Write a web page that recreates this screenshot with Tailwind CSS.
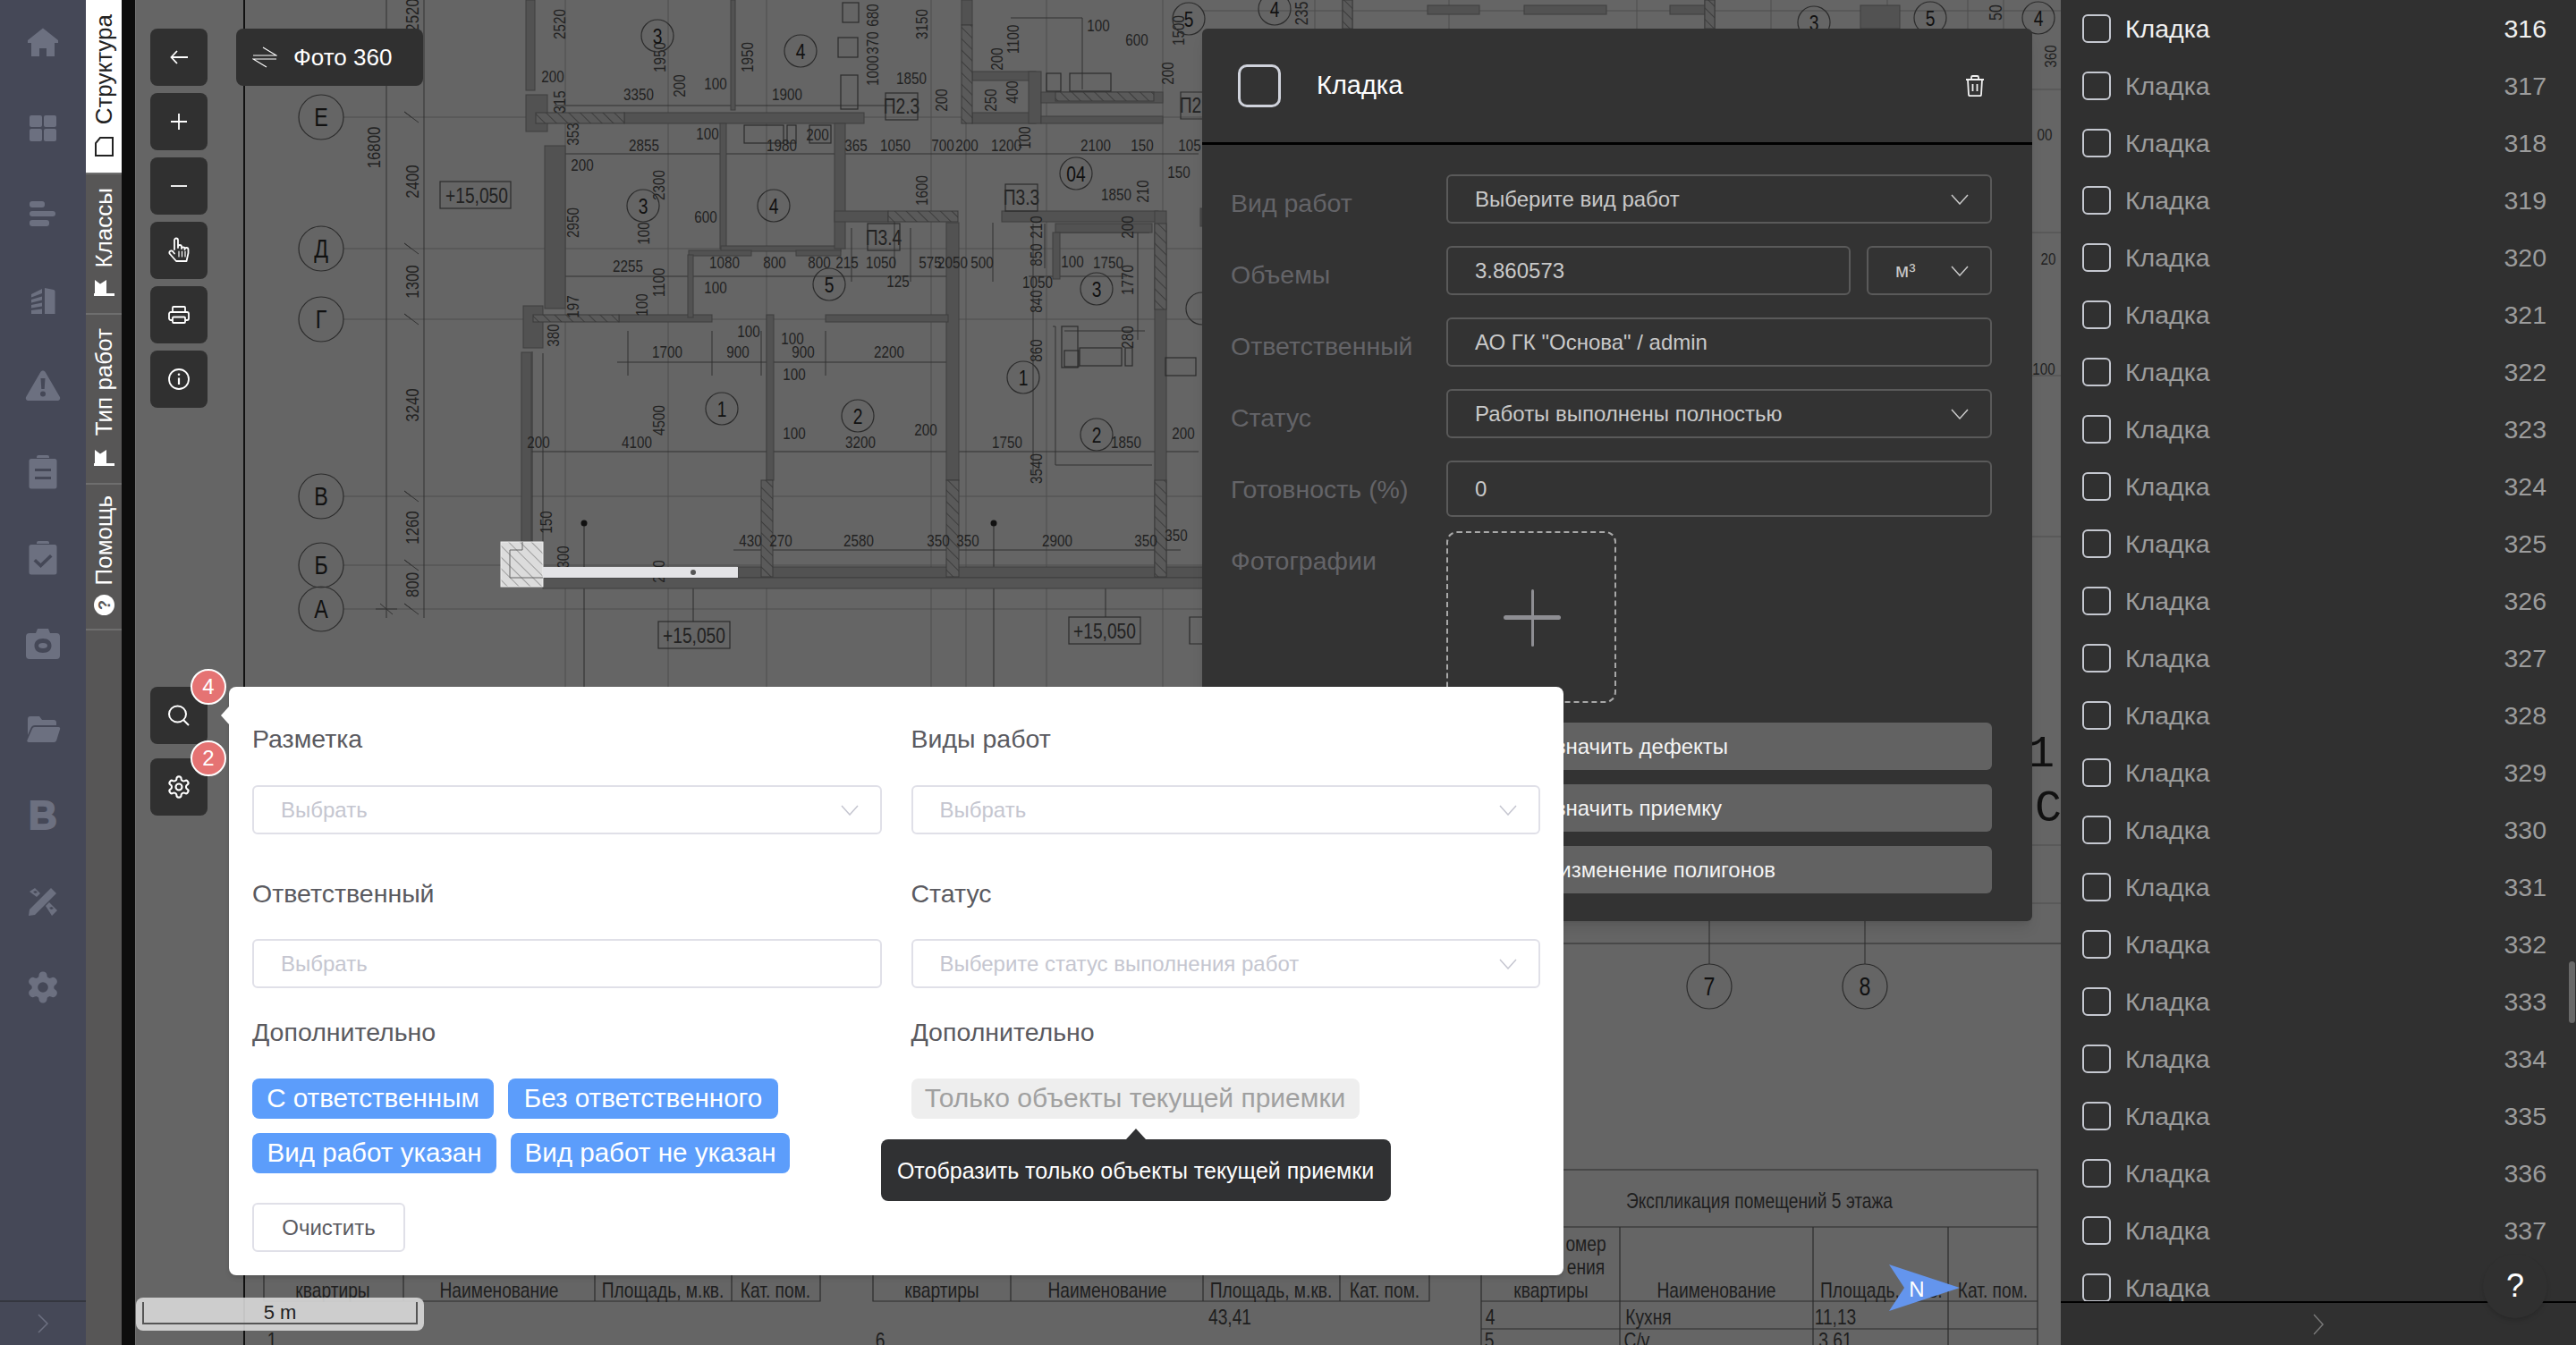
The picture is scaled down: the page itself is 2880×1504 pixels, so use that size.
<!DOCTYPE html>
<html lang="ru">
<head>
<meta charset="utf-8">
<title>Кладка</title>
<script src="https://cdn.jsdelivr.net/npm/@tailwindcss/browser@4"></script>
</head>
<body class="m-0 bg-[#656565]">
<div class="relative flex w-[2880px] h-[1504px] overflow-hidden font-['Liberation_Sans',Arial,sans-serif]">

  <!-- main nav -->
  <nav class="w-24 shrink-0 h-full bg-[#454857] flex flex-col text-[#6c7080]">
    <div class="h-24 flex items-center justify-center"><svg class="w-9 h-9" viewBox="0 0 36 36" fill="currentColor"><path d="M18 1.500 35 15v3h-4v15H22V24h-8v9H5V18H1v-3z"/></svg></div>
    <div class="h-24 flex items-center justify-center"><svg class="w-9 h-9" viewBox="0 0 36 36" fill="currentColor"><rect x="3" y="3" width="14" height="13" rx="2"/><rect x="19" y="3" width="14" height="13" rx="2"/><rect x="3" y="18" width="14" height="14" rx="2"/><rect x="19" y="18" width="14" height="14" rx="2"/></svg></div>
    <div class="h-24 flex items-center justify-center"><svg class="w-9 h-9" viewBox="0 0 36 36" fill="currentColor"><rect x="3" y="3" width="17" height="7" rx="3"/><rect x="3" y="14" width="29" height="6" rx="3"/><rect x="3" y="24" width="22" height="7" rx="3"/></svg></div>
    <div class="h-24 flex items-center justify-center"><svg class="w-9 h-9" viewBox="0 0 36 36" fill="currentColor"><path d="M20 4 30 6a2 2 0 0 1 1.500 2V33H20z"/><path d="M5 11 17 5v5L5 14.500zM5 17l12-3.500v4L5 20.500zM5 23l12-2.500v4L5 26.500zM5 29l12-1.500V33H5z"/></svg></div>
    <div class="h-24 flex items-center justify-center"><svg class="w-10 h-10" viewBox="0 0 40 40" fill="currentColor"><path fill-rule="evenodd" d="M20 2.500c1.200 0 2.200.6 2.800 1.700l16 27.500c1.100 2-.3 4.300-2.800 4.300H4c-2.500 0-3.900-2.300-2.800-4.300l16-27.500c.6-1.100 1.600-1.700 2.800-1.700zM17.500 11l.8 12h3.400l.8-12zM20 25.500a3 3 0 1 0 0 6 3 3 0 0 0 0-6z"/></svg></div>
    <div class="h-24 flex items-center justify-center"><svg class="w-10 h-10" viewBox="0 0 40 40" fill="currentColor"><path fill-rule="evenodd" d="M15 1h10a2 2 0 0 1 2 2v1h-14V3a2 2 0 0 1 2-2zM7 5h26a2.500 2.500 0 0 1 2.500 2.500V36a2.500 2.500 0 0 1-2.500 2.500H7A2.500 2.500 0 0 1 4.500 36V7.500A2.500 2.500 0 0 1 7 5zm4 11v3h18v-3zm0 9v3h18v-3z"/></svg></div>
    <div class="h-24 flex items-center justify-center"><svg class="w-10 h-10" viewBox="0 0 40 40" fill="currentColor"><path fill-rule="evenodd" d="M15 1h10a2 2 0 0 1 2 2v1h-14V3a2 2 0 0 1 2-2zM7 5h26a2.500 2.500 0 0 1 2.500 2.500V36a2.500 2.500 0 0 1-2.500 2.500H7A2.500 2.500 0 0 1 4.500 36V7.500A2.500 2.500 0 0 1 7 5zm21 11L17.500 26 12 21l-2.500 2.500 8 7.500 13-12.500z"/></svg></div>
    <div class="h-24 flex items-center justify-center"><svg class="w-10 h-10" viewBox="0 0 40 40" fill="currentColor"><path fill-rule="evenodd" d="M14 3h12l2 5h7a4 4 0 0 1 4 4v21a4 4 0 0 1-4 4H5a4 4 0 0 1-4-4V12a4 4 0 0 1 4-4h7zm6 11c-6 0-9.500 3-9.500 8s3.500 8 9.500 8 9.500-3 9.500-8-3.500-8-9.500-8zm0 5c3 0 5 1.200 5 3s-2 3-5 3-5-1.200-5-3 2-3 5-3z"/></svg></div>
    <div class="h-24 flex items-center justify-center"><svg class="w-10 h-10" viewBox="0 0 40 40" fill="currentColor"><path d="M6 5h10l3 4h13a3 3 0 0 1 3 3v3H11a5 5 0 0 0-4.500 3L3 26V8a3 3 0 0 1 3-3z"/><path d="M11 17h26.500c1.300 0 2 1 1.600 2.200l-4 12.800a3 3 0 0 1-2.900 2H4c-1.300 0-2-1-1.600-2.200L8 19a3 3 0 0 1 3-2z"/></svg></div>
    <div class="h-24 flex items-center justify-center"><span class="text-[44px] leading-none font-bold [-webkit-text-stroke:2px_#6c7080]">B</span></div>
    <div class="h-24 flex items-center justify-center"><svg class="w-9 h-9" viewBox="0 0 36 36" fill="currentColor"><path d="M27 3l6 6L9 33l-7 1 1-7z"/><path fill-rule="evenodd" d="M9 3 15 9 11 13 3 7zM21 23l4-4 9 9-6 6zM7 7l3-1 2 2-3 1zM25 25l3-1 2 2-3 1z"/></svg></div>
    <div class="h-24 flex items-center justify-center"><svg class="w-10 h-10" viewBox="0 0 24 24" fill="currentColor" stroke="currentColor" stroke-width="1"><path d="M12.220 2h-.44a2 2 0 0 0-2 2v.18a2 2 0 0 1-1 1.730l-.43.25a2 2 0 0 1-2 0l-.15-.08a2 2 0 0 0-2.730.73l-.22.38a2 2 0 0 0 .73 2.730l.15.1a2 2 0 0 1 1 1.720v.51a2 2 0 0 1-1 1.740l-.15.09a2 2 0 0 0-.73 2.730l.22.38a2 2 0 0 0 2.730.73l.15-.08a2 2 0 0 1 2 0l.43.25a2 2 0 0 1 1 1.730V20a2 2 0 0 0 2 2h.44a2 2 0 0 0 2-2v-.18a2 2 0 0 1 1-1.730l.43-.25a2 2 0 0 1 2 0l.15.08a2 2 0 0 0 2.730-.73l.22-.39a2 2 0 0 0-.73-2.730l-.15-.08a2 2 0 0 1-1-1.740v-.5a2 2 0 0 1 1-1.740l.15-.09a2 2 0 0 0 .73-2.730l-.22-.38a2 2 0 0 0-2.730-.73l-.15.08a2 2 0 0 1-2 0l-.43-.25a2 2 0 0 1-1-1.730V4a2 2 0 0 0-2-2z"/><circle cx="12" cy="12" r="3.500" fill="#454857" stroke="none"/></svg></div>
    <div class="mt-auto h-[50px] border-t-2 border-[#34363f] flex items-center justify-center"><svg class="w-3.5 h-6" viewBox="0 0 14 24" fill="none" stroke="#6c7080" stroke-width="1.500"><path d="M2 2l10 10L2 22"/></svg></div>
  </nav>

  <!-- vertical tabs -->
  <div class="w-10 shrink-0 h-full bg-[#575656] flex flex-col text-white text-[26px] leading-none">
    <div class="h-[193px] bg-white text-[#222] flex flex-col-reverse items-center pb-[18px] gap-[14px]">
      <svg class="w-[21px] h-[22px]" viewBox="0 0 21 22" fill="none" stroke="#222" stroke-width="2"><path d="M1 21V7l5-6h14v20z"/></svg>
      <span class="[writing-mode:vertical-rl] rotate-180">Структура</span>
    </div>
    <div class="h-[157px] border-t-2 border-[#6e6e6e] flex flex-col-reverse items-center pb-[19px] gap-[14px]">
      <svg class="w-[23px] h-[18px]" viewBox="0 0 23 18" fill="#fff"><path d="M0 15h23v3H0zM1 0l6 4.500L14 0v15H1z"/></svg>
      <span class="[writing-mode:vertical-rl] rotate-180">Классы</span>
    </div>
    <div class="h-[190px] border-t-2 border-[#6e6e6e] flex flex-col-reverse items-center pb-[19px] gap-[16px]">
      <svg class="w-[23px] h-[18px]" viewBox="0 0 23 18" fill="#fff"><path d="M0 15h23v3H0zM1 0l6 4.500L14 0v15H1z"/></svg>
      <span class="[writing-mode:vertical-rl] rotate-180">Тип работ</span>
    </div>
    <div class="h-[165px] border-y-2 border-[#6e6e6e] flex flex-col-reverse items-center pb-[15px] gap-[11px]">
      <svg class="w-[23px] h-[23px]" viewBox="0 0 23 23"><circle cx="11.500" cy="11.500" r="11.500" fill="#fff"/><text x="11.500" y="11.500" transform="rotate(-90 11.500 11.500)" text-anchor="middle" dominant-baseline="central" font-size="18" font-weight="700" fill="#575656" font-family="Liberation Sans">?</text></svg>
      <span class="[writing-mode:vertical-rl] rotate-180">Помощь</span>
    </div>
  </div>

  <div class="w-[15px] shrink-0 h-full bg-[#0d0d0d]"></div>

  <!-- canvas -->
  <main class="relative flex-1 h-full bg-[#656565]">
    <svg id="plan" class="absolute left-0 top-0" width="2153" height="1504" viewBox="151 0 2153 1504" font-family="Liberation Sans, sans-serif">
      <defs>
        <pattern id="h1" width="9" height="9" patternUnits="userSpaceOnUse" patternTransform="rotate(-45)"><rect width="9" height="9" fill="#5a5a5a"/><line x1="0" y1="0" x2="0" y2="9" stroke="#333" stroke-width="1.500"/></pattern>
        <pattern id="h2" width="9" height="9" patternUnits="userSpaceOnUse" patternTransform="rotate(-45)"><rect width="9" height="9" fill="#dcdcdc"/><line x1="0" y1="0" x2="0" y2="9" stroke="#8a8a8a" stroke-width="1.500"/></pattern>
      </defs>

      <!-- sheet frame and grid -->
      <line x1="151.500" y1="0" x2="151.500" y2="1504" stroke="#707070" stroke-width="1"/>
      <line x1="273" y1="0" x2="273" y2="1504" stroke="#111" stroke-width="2"/>
      <g stroke="#4e4e4e" stroke-width="1">
        <path d="M384 131H1344M384 278H1344M384 357H1344M384 555H1344M384 632H1344M384 681H1344"/>
        <path d="M632 0V768M747 0V768M857 0V768M1041 0V768M1080 0V768M1170 0V768M1300 0V768"/>
        <path d="M1470 0V32M1620 0V32M1830 0V32M1980 0V32M2110 0V32M2200 0V32M2240 0V32"/>
        <path d="M1344 12H2304M2272 100H2304M2272 260H2304M2272 420H2304M2272 600H2304M2272 945H2304M2272 1010H2304"/>
      </g>
      <g stroke="#333" stroke-width="1" fill="none">
        <path d="M432 0V691M474 0V691"/>
        <path d="M620 118H1000M620 172H1340M610 309H1060M690 405H1060M590 505H1340M820 615H1320M1150 309H1260M1190 370H1280"/>
        <path d="M702 370V420M796 370V420M851 370V420M923 370V420M1000 240V300M952 255V315M1018 255V315M1110 249V315M1168 250V300"/>
        <path d="M595 393V610M607 395V606M1155 250V530M1177 365H1180V520H1288M1180 260H1285M1272 260V380M1210 100V20H1130"/>
        <path d="M420 681h24M460 131l-8-6 16 12M460 278l-8-6 16 12M460 357l-8-6 16 12M460 555l-8-6 16 12M460 632l-8-6 16 12M460 681l-8-6 16 12M425 675l14 12"/>
      </g>
      <g stroke="#2c2c2c" stroke-width="1" fill="none">
        <path d="M1748 1055H2304M1911 1030V1078M2085 1030V1078"/>
        <path d="M653 585V768M1111 585V768M775 640V695M1236 640V690"/>
      </g>
      <circle cx="653" cy="585" r="3.500" fill="#111"/><circle cx="1111" cy="585" r="3.500" fill="#111"/>
      <circle cx="775" cy="640" r="3" fill="#444"/><circle cx="1236" cy="640" r="3" fill="#333"/>

      <!-- walls -->
      <g fill="#525252" stroke="#3f3f3f" stroke-width="1">
        <rect x="588" y="0" width="10" height="101"/>
        <rect x="817" y="0" width="5" height="123"/>
        <rect x="1075" y="0" width="12" height="28"/>
        <rect x="588" y="106" width="24" height="41"/>
        <rect x="698" y="126" width="268" height="12"/>
        <rect x="609" y="163" width="23" height="182"/>
        <rect x="805" y="138" width="7" height="140"/>
        <rect x="806" y="275" width="134" height="6"/>
        <rect x="933" y="138" width="12" height="140"/>
        <rect x="933" y="236" width="60" height="12"/>
        <rect x="1120" y="236" width="175" height="12"/>
        <rect x="1058" y="249" width="14" height="288"/>
        <rect x="857" y="352" width="8" height="185"/>
        <rect x="692" y="352" width="104" height="8"/>
        <rect x="923" y="352" width="137" height="8"/>
        <rect x="585" y="342" width="22" height="47"/>
        <rect x="583" y="394" width="11" height="212"/>
        <rect x="770" y="280" width="70" height="6"/>
        <rect x="890" y="280" width="50" height="6"/>
        <rect x="769" y="285" width="6" height="70"/>
        <rect x="825" y="634" width="520" height="12"/>
        <rect x="607" y="646" width="738" height="12" fill="#555"/>
        <rect x="1087" y="80" width="71" height="10"/>
        <rect x="1087" y="126" width="71" height="12"/>
        <rect x="1150" y="80" width="14" height="58"/>
        <rect x="1164" y="103" width="136" height="12"/>
        <rect x="1164" y="130" width="136" height="8"/>
        <rect x="1291" y="236" width="13" height="409"/>
        <rect x="1180" y="250" width="108" height="10"/>
        <rect x="1177" y="260" width="8" height="52"/>
        <rect x="1342" y="233" width="2" height="20"/>
        <rect x="1501" y="0" width="11" height="32"/>
        <rect x="1596" y="6" width="58" height="10"/>
        <rect x="1704" y="6" width="92" height="10"/>
        <rect x="1867" y="6" width="40" height="10"/>
        <rect x="1906" y="0" width="11" height="32"/>
        <rect x="2080" y="6" width="44" height="26"/>
      </g>
      <g fill="url(#h1)" stroke="#3a3a3a" stroke-width="1">
        <rect x="599" y="126" width="99" height="12"/>
        <rect x="596" y="352" width="96" height="8"/>
        <rect x="1075" y="28" width="12" height="110"/>
        <rect x="993" y="236" width="78" height="12"/>
        <rect x="851" y="537" width="13" height="108"/>
        <rect x="1058" y="537" width="14" height="108"/>
        <rect x="1291" y="537" width="13" height="108"/>
        <rect x="1291" y="250" width="13" height="96"/>
        <rect x="1180" y="103" width="110" height="10"/>
        <rect x="1501" y="0" width="11" height="32"/>
        <rect x="1906" y="0" width="11" height="32"/>
      </g>
      <!-- sanitary fixtures -->
      <g fill="none" stroke="#2c2c2c" stroke-width="1.200">
        <rect x="942" y="3" width="18" height="22"/><rect x="937" y="42" width="22" height="22"/><rect x="940" y="84" width="19" height="38"/>
        <rect x="832" y="140" width="44" height="20"/><rect x="880" y="140" width="10" height="20"/><rect x="905" y="140" width="24" height="20"/>
        <rect x="1190" y="392" width="16" height="18"/><rect x="1207" y="389" width="47" height="20"/><rect x="1258" y="389" width="8" height="20"/>
        <rect x="1187" y="365" width="18" height="46"/><rect x="1303" y="400" width="34" height="20"/><rect x="1196" y="82" width="46" height="20"/><rect x="1170" y="82" width="16" height="20"/>
      </g>

      <!-- plan labels -->
      <g fill="#222" font-size="19" text-anchor="middle" dominant-baseline="central">
        <text x="714" y="105">3350</text><text x="880" y="105">1900</text><text x="1019" y="87">1850</text><text x="618" y="85">200</text><text x="800" y="93">100</text>
        <text x="720" y="162">2855</text><text x="791" y="149">100</text><text x="874" y="162">1980</text><text x="914" y="150">200</text><text x="957" y="162">365</text><text x="1001" y="162">1050</text><text x="1054" y="162">700</text><text x="1081" y="162">200</text><text x="1125" y="162">1200</text><text x="1225" y="162">2100</text><text x="1277" y="162">150</text><text x="1330" y="162">105</text>
        <text x="651" y="184">200</text><text x="1318" y="192">150</text><text x="1248" y="217">1850</text><text x="1271" y="44">600</text><text x="1228" y="28">100</text>
        <text x="789" y="242">600</text><text x="702" y="297">2255</text><text x="810" y="293">1080</text><text x="866" y="293">800</text><text x="916" y="293">800</text><text x="947" y="293">215</text><text x="985" y="293">1050</text><text x="1040" y="293">575</text><text x="1065" y="293">2050</text><text x="1098" y="293">500</text>
        <text x="800" y="321">100</text><text x="1004" y="314">125</text><text x="1160" y="315">1050</text><text x="1199" y="292">100</text><text x="1239" y="293">1750</text>
        <text x="746" y="393">1700</text><text x="825" y="393">900</text><text x="837" y="370">100</text><text x="886" y="378">100</text><text x="898" y="393">900</text><text x="994" y="393">2200</text><text x="888" y="418">100</text>
        <text x="602" y="494">200</text><text x="712" y="494">4100</text><text x="888" y="484">100</text><text x="962" y="494">3200</text><text x="1035" y="480">200</text><text x="1126" y="494">1750</text><text x="1259" y="494">1850</text><text x="1323" y="484">200</text>
        <text x="839" y="604">430</text><text x="873" y="604">270</text><text x="960" y="604">2580</text><text x="1049" y="604">350</text><text x="1082" y="604">350</text><text x="1182" y="604">2900</text><text x="1281" y="604">350</text><text x="1315" y="598">350</text>
        <text x="625" y="27" transform="rotate(-90 625 27)">2520</text><text x="737" y="64" transform="rotate(-90 737 64)">1950</text><text x="835" y="64" transform="rotate(-90 835 64)">1950</text><text x="975" y="17" transform="rotate(-90 975 17)">680</text><text x="975" y="48" transform="rotate(-90 975 48)">370</text><text x="975" y="79" transform="rotate(-90 975 79)">1000</text><text x="1030" y="27" transform="rotate(-90 1030 27)">3150</text><text x="759" y="96" transform="rotate(-90 759 96)">200</text><text x="625" y="114" transform="rotate(-90 625 114)">315</text><text x="640" y="150" transform="rotate(-90 640 150)">353</text><text x="736" y="207" transform="rotate(-90 736 207)">2300</text><text x="640" y="249" transform="rotate(-90 640 249)">2950</text><text x="719" y="261" transform="rotate(-90 719 261)">100</text><text x="736" y="316" transform="rotate(-90 736 316)">1100</text><text x="717" y="341" transform="rotate(-90 717 341)">100</text><text x="640" y="343" transform="rotate(-90 640 343)">197</text><text x="618" y="375" transform="rotate(-90 618 375)">380</text><text x="736" y="470" transform="rotate(-90 736 470)">4500</text><text x="610" y="584" transform="rotate(-90 610 584)">150</text><text x="629" y="623" transform="rotate(-90 629 623)">300</text><text x="736" y="639" transform="rotate(-90 736 639)">200</text><text x="1030" y="213" transform="rotate(-90 1030 213)">1600</text><text x="1052" y="112" transform="rotate(-90 1052 112)">200</text><text x="1107" y="112" transform="rotate(-90 1107 112)">250</text><text x="1131" y="103" transform="rotate(-90 1131 103)">400</text><text x="1114" y="66" transform="rotate(-90 1114 66)">200</text><text x="1132" y="44" transform="rotate(-90 1132 44)">1100</text><text x="1317" y="34" transform="rotate(-90 1317 34)">1500</text><text x="1305" y="82" transform="rotate(-90 1305 82)">200</text><text x="1145" y="154" transform="rotate(-90 1145 154)">100</text><text x="1158" y="254" transform="rotate(-90 1158 254)">210</text><text x="1158" y="285" transform="rotate(-90 1158 285)">850</text><text x="1158" y="337" transform="rotate(-90 1158 337)">840</text><text x="1158" y="392" transform="rotate(-90 1158 392)">860</text><text x="1158" y="524" transform="rotate(-90 1158 524)">3540</text><text x="1260" y="313" transform="rotate(-90 1260 313)">1770</text><text x="1277" y="214" transform="rotate(-90 1277 214)">210</text><text x="1260" y="254" transform="rotate(-90 1260 254)">200</text><text x="1260" y="377" transform="rotate(-90 1260 377)">280</text>
        <text x="417" y="165" transform="rotate(-90 417 165)" font-size="21">16800</text><text x="460" y="17" transform="rotate(-90 460 17)" font-size="21">2520</text><text x="460" y="203" transform="rotate(-90 460 203)" font-size="21">2400</text><text x="460" y="315" transform="rotate(-90 460 315)" font-size="21">1300</text><text x="460" y="453" transform="rotate(-90 460 453)" font-size="21">3240</text><text x="460" y="590" transform="rotate(-90 460 590)" font-size="21">1260</text><text x="460" y="654" transform="rotate(-90 460 654)" font-size="21">800</text>
        <text x="1455" y="15" transform="rotate(-90 1455 15)" font-size="20">235</text><text x="2231" y="14" transform="rotate(-90 2231 14)" font-size="20">50</text><text x="2292" y="63" transform="rotate(-90 2292 63)">360</text><text x="2286" y="150">00</text><text x="2290" y="289">20</text><text x="2285" y="412">100</text>
        <text x="1008" y="118" font-size="24">П2.3</text><text x="988" y="265" font-size="24">П3.4</text><text x="1142" y="220" font-size="24">П3.3</text><text x="1331" y="117" font-size="24">П2</text>
        <text x="533" y="218" font-size="24">+15,050</text><text x="776" y="710" font-size="24">+15,050</text><text x="1235" y="705" font-size="24">+15,050</text>
      </g>
      <g fill="none" stroke="#2c2c2c" stroke-width="1.200">
        <rect x="492" y="203" width="79" height="30"/><rect x="736" y="695" width="80" height="30"/><rect x="1195" y="690" width="80" height="30"/><path d="M1344 690h-14v30h14"/>
        <rect x="990" y="104" width="36" height="30"/><rect x="970" y="250" width="36" height="30"/><rect x="1124" y="206" width="36" height="30"/><path d="M1344 103h-24v30h24"/>
        <ellipse cx="359" cy="131" rx="25" ry="25"/><ellipse cx="359" cy="278" rx="25" ry="25"/><ellipse cx="359" cy="357" rx="25" ry="25"/><ellipse cx="359" cy="555" rx="25" ry="25"/><ellipse cx="359" cy="632" rx="25" ry="25"/><ellipse cx="359" cy="681" rx="25" ry="25"/>
        <circle cx="735" cy="40" r="18"/><circle cx="895" cy="57" r="18"/><circle cx="719" cy="230" r="18"/><circle cx="865" cy="230" r="18"/><circle cx="927" cy="318" r="18"/><circle cx="1203" cy="194" r="18"/><circle cx="1226" cy="323" r="18"/><circle cx="1144" cy="422" r="18"/><circle cx="807" cy="457" r="18"/><circle cx="959" cy="465" r="18"/><circle cx="1226" cy="486" r="18"/><circle cx="1329" cy="21" r="18"/>
        <circle cx="1425" cy="10" r="18"/><circle cx="2028" cy="25" r="18"/><circle cx="2158" cy="20" r="18"/><circle cx="2279" cy="20" r="18"/><circle cx="1344" cy="345" r="18"/>
        <circle cx="1911" cy="1103" r="25"/><circle cx="2085" cy="1103" r="25"/>
      </g>
      <g fill="#111" font-size="29" text-anchor="middle" dominant-baseline="central">
        <text x="359" y="131">Е</text><text x="359" y="278">Д</text><text x="359" y="357">Г</text><text x="359" y="555">В</text><text x="359" y="632">Б</text><text x="359" y="681">А</text>
        <text x="1911" y="1103">7</text><text x="2085" y="1103">8</text>
        <g font-size="24"><text x="735" y="40">3</text><text x="895" y="57">4</text><text x="719" y="230">3</text><text x="865" y="230">4</text><text x="927" y="318">5</text><text x="1203" y="194">04</text><text x="1226" y="323">3</text><text x="1144" y="422">1</text><text x="807" y="457">1</text><text x="959" y="465">2</text><text x="1226" y="486">2</text><text x="1329" y="21">5</text><text x="1425" y="10">4</text><text x="2028" y="25">3</text><text x="2158" y="20">5</text><text x="2279" y="20">4</text></g>
        <text data-keep="1" x="2282" y="843" font-size="50" font-family="Liberation Mono">1</text><text data-keep="1" x="2290" y="904" font-size="50" font-family="Liberation Mono">С</text>
      </g>

      <!-- highlighted selection -->
      <rect x="560" y="606" width="47" height="50" fill="url(#h2)" stroke="#f0f0f0" stroke-width="1"/>
      <path d="M570 615h14v-9M570 615V646h37" fill="none" stroke="#666" stroke-width="1"/>
      <rect x="607" y="634" width="218" height="12" fill="#e3e3e6"/>
      <circle cx="775" cy="640" r="3" fill="#555"/>

      <!-- bottom tables -->
      <g fill="none" stroke="#2c2c2c" stroke-width="1.200">
        <path d="M295 1426V1455H917V1426M451 1426V1455M665 1426V1455M818 1426V1455"/>
        <path d="M976 1426V1455H1598V1426M1130 1426V1455M1345 1426V1455M1498 1426V1455"/>
        <path d="M1748 1308H2278V1504M1748 1372H2278M1811 1372V1504M2027 1372V1504M2178 1372V1504M1656 1426V1504M1656 1455H2278M1656 1486H2278"/>
      </g>
      <g fill="#1e1e1e" font-size="24" text-anchor="middle" dominant-baseline="central">
        <text x="372" y="1442">квартиры</text><text x="558" y="1442">Наименование</text><text x="741" y="1442">Площадь, м.кв.</text><text x="867" y="1442">Кат. пом.</text>
        <text x="1053" y="1442">квартиры</text><text x="1238" y="1442">Наименование</text><text x="1421" y="1442">Площадь, м.кв.</text><text x="1548" y="1442">Кат. пом.</text>
        <text x="304" y="1498">1</text><text x="984" y="1498">6</text><text x="1375" y="1472">43,41</text>
        <text x="1967" y="1342">Экспликация помещений 5 этажа</text>
        <text x="1773" y="1390">омер</text><text x="1773" y="1416">ения</text>
        <text x="1734" y="1442">квартиры</text><text x="1919" y="1442">Наименование</text><text x="2035" y="1442" text-anchor="start">Площадь, м.кв.</text><text x="2228" y="1442">Кат. пом.</text>
        <text x="1666" y="1472">4</text><text x="1843" y="1472">Кухня</text><text x="2052" y="1472">11,13</text><text x="1665" y="1498">5</text><text x="1830" y="1498">С/у</text><text x="2052" y="1498">3,61</text>
      </g>

      <!-- north arrow -->
      <polygon points="2112,1414 2191,1440 2112,1466 2129,1440" fill="#6495ed"/>
      <text data-keep="1" x="2143" y="1441" text-anchor="middle" dominant-baseline="central" fill="#fff" font-size="24" font-family="Liberation Sans">N</text>
    </svg>

    <!-- map tools -->
    <div class="absolute left-[17px] top-[32px] flex flex-col gap-2">
      <button class="w-16 h-16 rounded-lg bg-[#303030] flex items-center justify-center"><svg class="w-5 h-4" viewBox="0 0 20 16" fill="none" stroke="#fff" stroke-width="1.800"><path d="M20 8H1.500M8 1 1.500 8 8 15"/></svg></button>
      <button class="w-16 h-16 rounded-lg bg-[#303030] flex items-center justify-center"><svg class="w-5 h-5" viewBox="0 0 20 20" fill="none" stroke="#fff" stroke-width="1.800"><path d="M10 1v18M1 10h18"/></svg></button>
      <button class="w-16 h-16 rounded-lg bg-[#303030] flex items-center justify-center"><svg class="w-5 h-5" viewBox="0 0 20 20" fill="none" stroke="#fff" stroke-width="1.800"><path d="M1 10h18"/></svg></button>
      <button class="w-16 h-16 rounded-lg bg-[#303030] flex items-center justify-center"><svg class="w-6 h-[30px]" viewBox="0 0 24 30" fill="none" stroke="#fff" stroke-width="1.800" stroke-linejoin="round" stroke-linecap="round"><path d="M7 14V3.500a2 2 0 0 1 4 0V12M11 11a2 2 0 0 1 4 0v2M15 12.500a2 2 0 0 1 3.500 0v1.500M18.500 14a2 2 0 0 1 4 0v4l-2 9H9L2 19a2 2 0 0 1 0-3c1-1 2.500-.5 3 0l2 2.500"/><path d="M12 16v6M15.500 16v6M19 16v6" stroke-width="1.200"/></svg></button>
      <button class="w-16 h-16 rounded-lg bg-[#303030] flex items-center justify-center"><svg class="w-6 h-5" viewBox="0 0 24 20" fill="none" stroke="#fff" stroke-width="1.800" stroke-linejoin="round"><path d="M5 7V2a1 1 0 0 1 1-1h12a1 1 0 0 1 1 1v5"/><path d="M5 16H3a2 2 0 0 1-2-2V9a2 2 0 0 1 2-2h18a2 2 0 0 1 2 2v5a2 2 0 0 1-2 2h-2"/><rect x="5" y="12.500" width="14" height="6.500" rx="1"/></svg></button>
      <button class="w-16 h-16 rounded-lg bg-[#303030] flex items-center justify-center"><svg class="w-6 h-6" viewBox="0 0 24 24" fill="none" stroke="#fff" stroke-width="1.800"><circle cx="12" cy="12" r="11"/><path d="M12 10.500V18" stroke-width="2.200"/><circle cx="12" cy="6.800" r="1.300" fill="#fff" stroke="none"/></svg></button>
    </div>

    <div class="absolute left-[113px] top-[32px] w-[209px] h-16 rounded-lg bg-[#303030] flex items-center pl-[18px] gap-[18px] text-white text-[26px] font-medium">
      <svg class="w-7 h-7" viewBox="0 0 28 28" fill="none" stroke="#fff" stroke-width="1.200"><path d="M1 12H27L12 3M27 16H1L16 25"/></svg>
      <span>Фото 360</span>
    </div>

    <!-- details panel -->
    <section class="absolute left-[1193px] top-[32px] w-[928px] h-[998px] rounded-md bg-[#333333] shadow-lg">
      <header class="h-[130px] border-b-[3px] border-black flex items-center pl-10 pr-[53px]">
        <span class="w-12 h-12 rounded-[10px] border-[3px] border-[#d0d3dc]"></span>
        <span class="ml-10 text-white text-[29px]">Кладка</span>
        <svg class="ml-auto w-[22px] h-6" viewBox="0 0 22 24" fill="none" stroke="#f0f0f0" stroke-width="1.800"><path d="M1 5h20M7 4.500V2.500A1.500 1.500 0 0 1 8.500 1h5A1.500 1.500 0 0 1 15 2.500v2"/><path d="M3 5l1 17a1.500 1.500 0 0 0 1.500 1.200h11A1.500 1.500 0 0 0 18 22L19 5"/><path d="M8.500 10v8M13.500 10v8"/></svg>
      </header>
      <div class="pl-8 pr-[45px] pt-[33px] text-[24px] text-[#c9c9c9]">
        <div class="flex h-[55px]">
          <span class="w-[241px] pt-[14px] text-[28.500px] leading-[36px] text-[#646468]">Вид работ</span>
          <div class="flex-1 rounded-md border-2 border-[#5a5a5a] flex items-center pl-[30px] pr-[24px] justify-between"><span>Выберите вид работ</span><svg class="w-5 h-3" viewBox="0 0 20 12" fill="none" stroke="#c9c9c9" stroke-width="1.500"><path d="M1 1l9 10 9-10"/></svg></div>
        </div>
        <div class="flex h-[55px] mt-[25px]">
          <span class="w-[241px] pt-[14px] text-[28.500px] leading-[36px] text-[#646468]">Объемы</span>
          <div class="flex-1 flex gap-[18px]">
            <div class="flex-1 rounded-md border-2 border-[#5a5a5a] flex items-center pl-[30px]">3.860573</div>
            <div class="w-[140px] rounded-md border-2 border-[#5a5a5a] flex items-center pl-[30px] pr-[24px] justify-between"><span class="text-[22px]">м³</span><svg class="w-5 h-3" viewBox="0 0 20 12" fill="none" stroke="#c9c9c9" stroke-width="1.500"><path d="M1 1l9 10 9-10"/></svg></div>
          </div>
        </div>
        <div class="flex h-[55px] mt-[25px]">
          <span class="w-[241px] pt-[14px] text-[28.500px] leading-[36px] text-[#646468]">Ответственный</span>
          <div class="flex-1 rounded-md border-2 border-[#5a5a5a] flex items-center pl-[30px]">АО ГК "Основа" / admin</div>
        </div>
        <div class="flex h-[55px] mt-[25px]">
          <span class="w-[241px] pt-[14px] text-[28.500px] leading-[36px] text-[#646468]">Статус</span>
          <div class="flex-1 rounded-md border-2 border-[#5a5a5a] flex items-center pl-[30px] pr-[24px] justify-between"><span>Работы выполнены полностью</span><svg class="w-5 h-3" viewBox="0 0 20 12" fill="none" stroke="#c9c9c9" stroke-width="1.500"><path d="M1 1l9 10 9-10"/></svg></div>
        </div>
        <div class="flex h-[63px] mt-[25px]">
          <span class="w-[241px] pt-[14px] text-[28.500px] leading-[36px] text-[#646468]">Готовность (%)</span>
          <div class="flex-1 rounded-md border-2 border-[#5a5a5a] flex items-center pl-[30px]">0</div>
        </div>
        <div class="flex h-[192px] mt-4">
          <span class="w-[241px] pt-[15px] text-[28.500px] leading-[36px] text-[#646468]">Фотографии</span>
          <div class="w-[190px] rounded-xl border-2 border-dashed border-[#a8a8a8] relative">
            <span class="absolute left-[62px] top-[92px] w-16 h-[5px] rounded-sm bg-[#8e8e93]"></span>
            <span class="absolute left-[93px] top-[63px] w-[3px] h-16 rounded-sm bg-[#8e8e93]"></span>
          </div>
        </div>
        <div class="mt-[22px] h-[53px] rounded-md bg-[#626262] text-[#f4f4f4] flex items-center pl-[333px]">Назначить дефекты</div>
        <div class="mt-4 h-[53px] rounded-md bg-[#626262] text-[#f4f4f4] flex items-center pl-[333px]">Назначить приемку</div>
        <div class="mt-4 h-[53px] rounded-md bg-[#626262] text-[#f4f4f4] flex items-center justify-end pr-[242px]">Разрешить изменение полигонов</div>
      </div>
    </section>

    <!-- filter toggle buttons -->
    <div class="absolute left-[17px] top-[768px] flex flex-col gap-4">
      <div class="relative w-16 h-16 rounded-lg bg-[#303030] flex items-center justify-center">
        <svg class="w-6 h-6" viewBox="0 0 24 24" fill="none" stroke="#fff" stroke-width="2"><ellipse cx="10.500" cy="10.500" rx="9.500" ry="9"/><path d="M17 17l6 6"/></svg>
        <span class="absolute left-[45px] top-[-20px] w-10 h-10 rounded-full bg-[#e57373] border-2 border-white text-white text-[24px] flex items-center justify-center">4</span>
      </div>
      <div class="relative w-16 h-16 rounded-lg bg-[#303030] flex items-center justify-center">
        <svg class="w-[28px] h-[28px]" viewBox="0 0 24 24" fill="none" stroke="#fff" stroke-width="1.800"><path d="M12.220 2h-.44a2 2 0 0 0-2 2v.18a2 2 0 0 1-1 1.730l-.43.25a2 2 0 0 1-2 0l-.15-.08a2 2 0 0 0-2.730.73l-.22.38a2 2 0 0 0 .73 2.730l.15.1a2 2 0 0 1 1 1.720v.51a2 2 0 0 1-1 1.740l-.15.09a2 2 0 0 0-.73 2.730l.22.38a2 2 0 0 0 2.730.73l.15-.08a2 2 0 0 1 2 0l.43.25a2 2 0 0 1 1 1.730V20a2 2 0 0 0 2 2h.44a2 2 0 0 0 2-2v-.18a2 2 0 0 1 1-1.730l.43-.25a2 2 0 0 1 2 0l.15.08a2 2 0 0 0 2.730-.73l.22-.39a2 2 0 0 0-.73-2.730l-.15-.08a2 2 0 0 1-1-1.740v-.5a2 2 0 0 1 1-1.740l.15-.09a2 2 0 0 0 .73-2.730l-.22-.38a2 2 0 0 0-2.730-.73l-.15.08a2 2 0 0 1-2 0l-.43-.25a2 2 0 0 1-1-1.730V4a2 2 0 0 0-2-2z"/><circle cx="12" cy="12" r="3"/></svg>
        <span class="absolute left-[45px] top-[-20px] w-10 h-10 rounded-full bg-[#e57373] border-2 border-white text-white text-[24px] flex items-center justify-center">2</span>
      </div>
    </div>

    <!-- filter popover -->
    <section class="absolute left-[105px] top-[768px] w-[1492px] h-[658px] rounded-lg bg-white shadow-md px-[26px] pt-[41px] text-[#5a5a60]">
      <span class="absolute left-[-9px] top-[21px] w-0 h-0 border-y-[11px] border-y-transparent border-r-[10px] border-r-white"></span>
      <div class="grid grid-cols-2 gap-x-[33px] text-[28.500px] leading-[34px]">
        <div>
          <div>Разметка</div>
          <div class="mt-[35px] h-[55px] rounded-md border-2 border-[#e0e0e8] flex items-center justify-between pl-[30px] pr-[24px] text-[24px] text-[#c5c6d0]"><span>Выбрать</span><svg class="w-5 h-3" viewBox="0 0 20 12" fill="none" stroke="#c5c6d0" stroke-width="1.500"><path d="M1 1l9 10 9-10"/></svg></div>
        </div>
        <div>
          <div>Виды работ</div>
          <div class="mt-[35px] h-[55px] rounded-md border-2 border-[#e0e0e8] flex items-center justify-between pl-[30px] pr-[24px] text-[24px] text-[#c5c6d0]"><span>Выбрать</span><svg class="w-5 h-3" viewBox="0 0 20 12" fill="none" stroke="#c5c6d0" stroke-width="1.500"><path d="M1 1l9 10 9-10"/></svg></div>
        </div>
        <div class="mt-[49px]">
          <div>Ответственный</div>
          <div class="mt-[34px] h-[55px] rounded-md border-2 border-[#e0e0e8] flex items-center pl-[30px] text-[24px] text-[#c5c6d0]">Выбрать</div>
        </div>
        <div class="mt-[49px]">
          <div>Статус</div>
          <div class="mt-[34px] h-[55px] rounded-md border-2 border-[#e0e0e8] flex items-center justify-between pl-[30px] pr-[24px] text-[24px] text-[#c5c6d0]"><span>Выберите статус выполнения работ</span><svg class="w-5 h-3" viewBox="0 0 20 12" fill="none" stroke="#c5c6d0" stroke-width="1.500"><path d="M1 1l9 10 9-10"/></svg></div>
        </div>
        <div class="mt-8">
          <div>Дополнительно</div>
          <div class="mt-[35px] flex flex-wrap gap-x-4 gap-y-4 text-[29.600px] leading-[43px] text-white">
            <span class="h-[45px] w-[270px] rounded-lg bg-[#5c9dfb] text-center">С ответственным</span>
            <span class="h-[45px] w-[302px] rounded-lg bg-[#5c9dfb] text-center">Без ответственного</span>
            <span class="h-[45px] w-[273px] rounded-lg bg-[#5c9dfb] text-center">Вид работ указан</span>
            <span class="h-[45px] w-[312px] rounded-lg bg-[#5c9dfb] text-center">Вид работ не указан</span>
          </div>
        </div>
        <div class="mt-8">
          <div>Дополнительно</div>
          <div class="mt-[35px] relative">
            <span class="block h-[45px] w-[501px] rounded-lg bg-[#eeeeee] text-center text-[30px] leading-[43px] text-[#a0a0a0]">Только объекты текущей приемки</span>
            <div class="absolute left-[-34px] top-[68px] w-[570px] h-[69px] rounded-lg bg-[#303133] text-white text-[25px] flex items-center justify-center">
              <span class="absolute left-[274px] top-[-12px] w-0 h-0 border-x-[11px] border-x-transparent border-b-[12px] border-b-[#303133]"></span>
              Отобразить только объекты текущей приемки
            </div>
          </div>
        </div>
      </div>
      <button class="mt-[33px] w-[171px] h-[55px] rounded-md border-2 border-[#e0e0e8] text-[24px] text-[#5a5a60] bg-white">Очистить</button>
    </section>

    <!-- scale -->
    <div class="absolute left-px top-[1451px] w-[322px] h-[37px] rounded-lg bg-[#d8d8d8]/90 px-[7px] pt-[5px]">
      <div class="h-[25px] border-x-2 border-b-2 border-[#555] flex items-center justify-center text-[22px] leading-none text-[#222]">5 m</div>
    </div>
  </main>

  <!-- right list -->
  <aside class="relative w-[576px] shrink-0 h-full bg-[#303030] flex flex-col">
    <div class="h-[1455px] overflow-hidden border-b-2 border-black text-[28.500px] leading-none text-[#9c9c9c] box-content">
      <div class="h-16 flex items-center pl-6 pr-[33px] text-[#f0f0f0]"><span class="w-8 h-8 rounded-md border-2 border-[#c5c8d0]"></span><span class="ml-4">Кладка</span><span class="ml-auto">316</span></div>
      <div class="h-16 flex items-center pl-6 pr-[33px]"><span class="w-8 h-8 rounded-md border-2 border-[#c5c8d0]"></span><span class="ml-4">Кладка</span><span class="ml-auto">317</span></div>
      <div class="h-16 flex items-center pl-6 pr-[33px]"><span class="w-8 h-8 rounded-md border-2 border-[#c5c8d0]"></span><span class="ml-4">Кладка</span><span class="ml-auto">318</span></div>
      <div class="h-16 flex items-center pl-6 pr-[33px]"><span class="w-8 h-8 rounded-md border-2 border-[#c5c8d0]"></span><span class="ml-4">Кладка</span><span class="ml-auto">319</span></div>
      <div class="h-16 flex items-center pl-6 pr-[33px]"><span class="w-8 h-8 rounded-md border-2 border-[#c5c8d0]"></span><span class="ml-4">Кладка</span><span class="ml-auto">320</span></div>
      <div class="h-16 flex items-center pl-6 pr-[33px]"><span class="w-8 h-8 rounded-md border-2 border-[#c5c8d0]"></span><span class="ml-4">Кладка</span><span class="ml-auto">321</span></div>
      <div class="h-16 flex items-center pl-6 pr-[33px]"><span class="w-8 h-8 rounded-md border-2 border-[#c5c8d0]"></span><span class="ml-4">Кладка</span><span class="ml-auto">322</span></div>
      <div class="h-16 flex items-center pl-6 pr-[33px]"><span class="w-8 h-8 rounded-md border-2 border-[#c5c8d0]"></span><span class="ml-4">Кладка</span><span class="ml-auto">323</span></div>
      <div class="h-16 flex items-center pl-6 pr-[33px]"><span class="w-8 h-8 rounded-md border-2 border-[#c5c8d0]"></span><span class="ml-4">Кладка</span><span class="ml-auto">324</span></div>
      <div class="h-16 flex items-center pl-6 pr-[33px]"><span class="w-8 h-8 rounded-md border-2 border-[#c5c8d0]"></span><span class="ml-4">Кладка</span><span class="ml-auto">325</span></div>
      <div class="h-16 flex items-center pl-6 pr-[33px]"><span class="w-8 h-8 rounded-md border-2 border-[#c5c8d0]"></span><span class="ml-4">Кладка</span><span class="ml-auto">326</span></div>
      <div class="h-16 flex items-center pl-6 pr-[33px]"><span class="w-8 h-8 rounded-md border-2 border-[#c5c8d0]"></span><span class="ml-4">Кладка</span><span class="ml-auto">327</span></div>
      <div class="h-16 flex items-center pl-6 pr-[33px]"><span class="w-8 h-8 rounded-md border-2 border-[#c5c8d0]"></span><span class="ml-4">Кладка</span><span class="ml-auto">328</span></div>
      <div class="h-16 flex items-center pl-6 pr-[33px]"><span class="w-8 h-8 rounded-md border-2 border-[#c5c8d0]"></span><span class="ml-4">Кладка</span><span class="ml-auto">329</span></div>
      <div class="h-16 flex items-center pl-6 pr-[33px]"><span class="w-8 h-8 rounded-md border-2 border-[#c5c8d0]"></span><span class="ml-4">Кладка</span><span class="ml-auto">330</span></div>
      <div class="h-16 flex items-center pl-6 pr-[33px]"><span class="w-8 h-8 rounded-md border-2 border-[#c5c8d0]"></span><span class="ml-4">Кладка</span><span class="ml-auto">331</span></div>
      <div class="h-16 flex items-center pl-6 pr-[33px]"><span class="w-8 h-8 rounded-md border-2 border-[#c5c8d0]"></span><span class="ml-4">Кладка</span><span class="ml-auto">332</span></div>
      <div class="h-16 flex items-center pl-6 pr-[33px]"><span class="w-8 h-8 rounded-md border-2 border-[#c5c8d0]"></span><span class="ml-4">Кладка</span><span class="ml-auto">333</span></div>
      <div class="h-16 flex items-center pl-6 pr-[33px]"><span class="w-8 h-8 rounded-md border-2 border-[#c5c8d0]"></span><span class="ml-4">Кладка</span><span class="ml-auto">334</span></div>
      <div class="h-16 flex items-center pl-6 pr-[33px]"><span class="w-8 h-8 rounded-md border-2 border-[#c5c8d0]"></span><span class="ml-4">Кладка</span><span class="ml-auto">335</span></div>
      <div class="h-16 flex items-center pl-6 pr-[33px]"><span class="w-8 h-8 rounded-md border-2 border-[#c5c8d0]"></span><span class="ml-4">Кладка</span><span class="ml-auto">336</span></div>
      <div class="h-16 flex items-center pl-6 pr-[33px]"><span class="w-8 h-8 rounded-md border-2 border-[#c5c8d0]"></span><span class="ml-4">Кладка</span><span class="ml-auto">337</span></div>
      <div class="h-16 flex items-center pl-6 pr-[33px]"><span class="w-8 h-8 rounded-md border-2 border-[#c5c8d0]"></span><span class="ml-4">Кладка</span></div>
    </div>
    <div class="flex-1 flex items-center justify-center"><svg class="w-3 h-6" viewBox="0 0 12 24" fill="none" stroke="#777" stroke-width="1.500"><path d="M1 1l10 11L1 23"/></svg></div>
    <span class="absolute right-[1px] top-[1075px] w-[7px] h-[69px] rounded-full bg-[#686868]"></span>
    <div class="absolute left-[472px] top-[1402px] w-[72px] h-[72px] rounded-full bg-[#303030] shadow-md flex items-center justify-center text-white text-[36px]">?</div>
  </aside>
</div>
<script>
document.querySelectorAll('#plan text:not([data-keep])').forEach(function (t) {
  t.setAttribute('textLength', (t.getComputedTextLength() * 0.8).toFixed(1));
  t.setAttribute('lengthAdjust', 'spacingAndGlyphs');
});
</script>
</body>
</html>
